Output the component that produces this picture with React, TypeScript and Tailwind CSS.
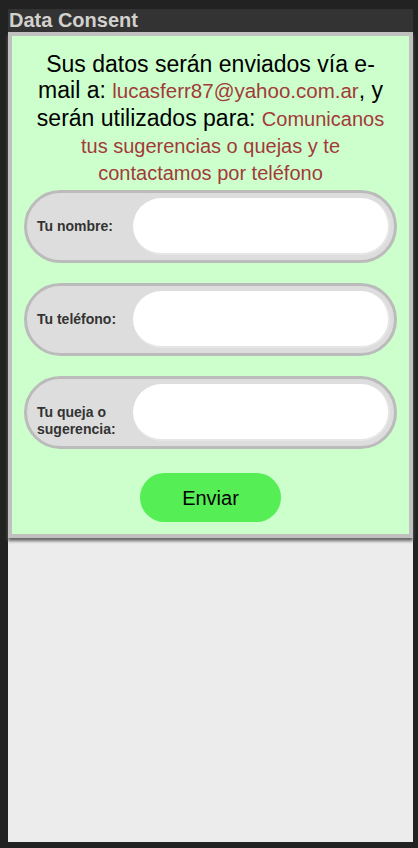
import React from "react";

const FIELDS = [
  { label: "Tu nombre:", id: "nombre" },
  { label: "Tu teléfono:", id: "telefono" },
  { label: "Tu queja o sugerencia:", id: "queja" },
];

export default function App() {
  return (
    <div
      className="h-[848px] bg-[#222222] pt-[9px] pl-[8px] pr-[5px] pb-[6px]"
      style={{ fontFamily: '"Liberation Sans", Arial, sans-serif' }}
    >
      <div className="flex h-full flex-col">
        {/* Title bar */}
        <div className="h-[23px] bg-[#333333] pl-[1px] text-[20px] font-bold leading-[23px] text-[#d2d0cc]">
          Data Consent
        </div>

        {/* Consent card */}
        <div className="relative z-10 border-4 border-[#c0c0c0] bg-[#ccffcc] pb-[12px] shadow-[0_3px_3px_#666]">
          <p className="px-[20px] pt-[15px] text-center text-[23px] leading-[26.3px] text-black">
            Sus datos serán enviados vía e-mail a:{" "}
            <span className="text-[20.5px] text-[#a33a3a]">lucasferr87@yahoo.com.ar</span>, y serán
            utilizados para:{" "}
            <span className="text-[20px] text-[#a33a3a]">
              Comunicanos tus sugerencias o quejas y te contactamos por teléfono
            </span>
          </p>

          <form className="mt-[4px] flex flex-col gap-[20px] px-[12px]" onSubmit={(e) => e.preventDefault()}>
            {FIELDS.map((f, i) => (
              <div
                key={f.id}
                className="flex h-[73px] items-center rounded-full border-[3px] border-[#bbbbbb] bg-[#dddddd] py-[5px] pl-[10px] pr-[4px]"
              >
                <label
                  htmlFor={f.id}
                  className={`w-[96px] shrink-0 text-[14px] font-bold leading-[17px] text-[#333333] ${
                    i === 2 ? "mt-[16px]" : ""
                  }`}
                >
                  {f.label}
                </label>
                <input
                  id={f.id}
                  className="h-[57px] flex-1 rounded-full border-b-2 border-r-2 border-[#e6e6e6] bg-white px-4 outline-none"
                />
              </div>
            ))}

            <div className="mt-[4px] flex justify-center">
              <button
                type="submit"
                className="h-[49px] w-[141px] rounded-full bg-[#55ee55] text-[20px] text-black"
              >
                Enviar
              </button>
            </div>
          </form>
        </div>

        <div className="flex-1 bg-[#ececec]" />
      </div>
    </div>
  );
}
